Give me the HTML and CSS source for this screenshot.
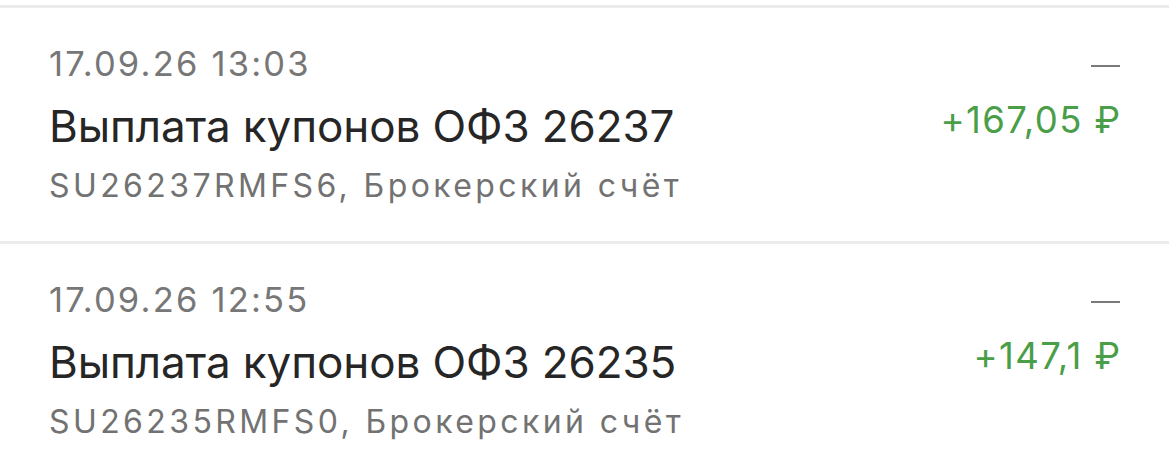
FILE: index.html
```html
<!DOCTYPE html>
<html lang="ru">
<head>
<meta charset="utf-8">
<title>Операции</title>
<link rel="stylesheet" href="styles.css">
</head>
<body>
<div class="list">
  <div class="op">
    <div class="op-main">
      <div class="op-date">17.09.26 13:03</div>
      <div class="op-title">Выплата купонов ОФЗ 26237</div>
      <div class="op-sub">SU26237RMFS6, Брокерский счёт</div>
    </div>
    <div class="op-side">
      <div class="op-dash"></div>
      <div class="op-amount">+167,05 ₽</div>
    </div>
  </div>
  <div class="op">
    <div class="op-main">
      <div class="op-date">17.09.26 12:55</div>
      <div class="op-title">Выплата купонов ОФЗ 26235</div>
      <div class="op-sub">SU26235RMFS0, Брокерский счёт</div>
    </div>
    <div class="op-side">
      <div class="op-dash"></div>
      <div class="op-amount">+147,1 ₽</div>
    </div>
  </div>
</div>
</body>
</html>
```

FILE: styles.css
```css
html, body {
  margin: 0;
  padding: 0;
  background: #ffffff;
}
body {
  font-family: Inter, "Noto Sans", "DejaVu Sans", sans-serif;
  overflow: hidden;
}
.list {
  padding-top: 5px;
}
.op {
  display: flex;
  justify-content: space-between;
  border-top: 3px solid #ebebeb;
  padding: 36px 49px 35px 49px;
}
.op-main {
  display: flex;
  flex-direction: column;
}
.op-date {
  font-size: 34.5px;
  line-height: 40px;
  color: #777777;
  letter-spacing: 2.2px;
  margin-bottom: 13.5px;
}
.op-title {
  font-size: 44px;
  line-height: 56px;
  color: #262626;
  letter-spacing: -0.1px;
  margin-bottom: 12.5px;
}
.op-sub {
  font-size: 32px;
  line-height: 40px;
  color: #727272;
  letter-spacing: 3.4px;
}
.op-side {
  display: flex;
  flex-direction: column;
  align-items: flex-end;
}
.op-dash {
  width: 29px;
  height: 2px;
  background: #7a7a7a;
  margin-top: 20.5px;
  margin-bottom: 31px;
}
.op-amount {
  font-size: 36.5px;
  line-height: 44px;
  color: #4a9e48;
  letter-spacing: 1.4px;
  margin-right: -1.4px;
}
```
